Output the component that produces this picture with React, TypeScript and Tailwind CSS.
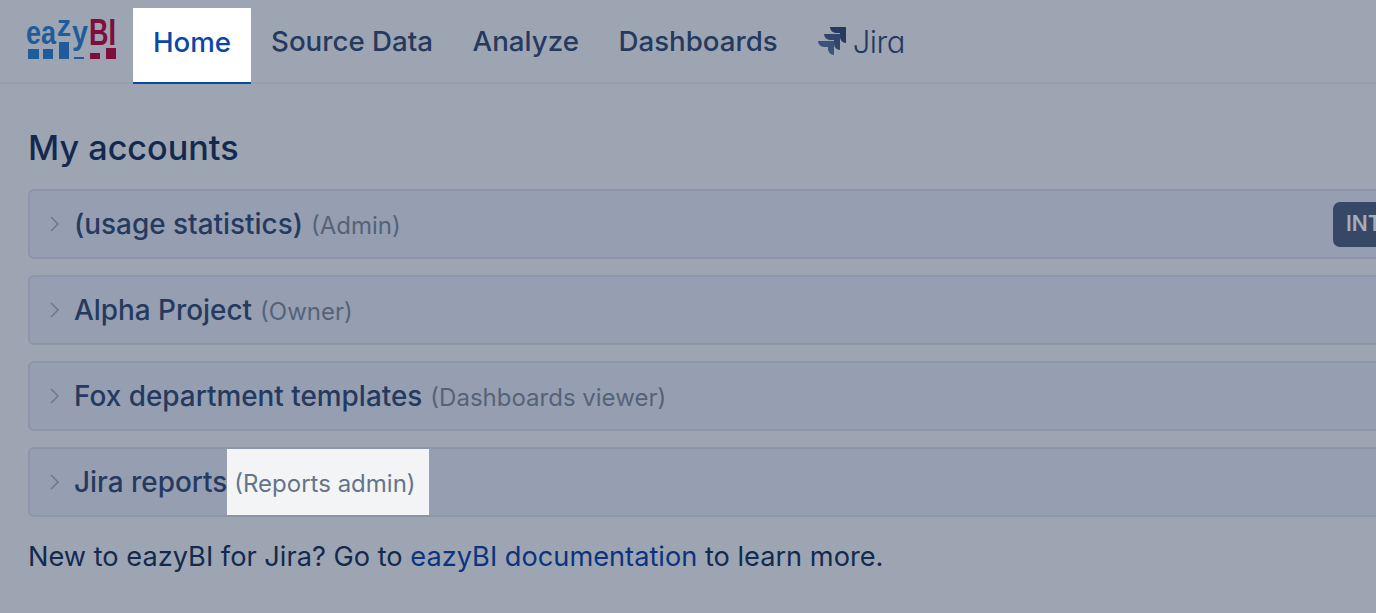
const navItems = ['Source Data', 'Analyze', 'Dashboards'];

function Logo() {
  const blue = '#1f5c9c';
  const red = '#7e0f3d';
  const font = 'Liberation Sans, sans-serif';
  return (
    <svg width="92" height="46" viewBox="0 0 92 46" className="shrink-0 overflow-visible">
      <text x="0" y="26" fontFamily={font} fontWeight="700" fontSize="33" fill={blue} textLength="30" lengthAdjust="spacingAndGlyphs">ea</text>
      <text x="31" y="18" fontFamily={font} fontWeight="700" fontSize="30" fill={blue} textLength="14" lengthAdjust="spacingAndGlyphs">z</text>
      <text x="46" y="26" fontFamily={font} fontWeight="700" fontSize="33" fill={blue} textLength="16" lengthAdjust="spacingAndGlyphs">y</text>
      <text x="63" y="27" fontFamily={font} fontWeight="700" fontSize="36" fill={red} textLength="27" lengthAdjust="spacingAndGlyphs">BI</text>
      <rect x="2" y="31" width="11" height="10" fill={blue} />
      <rect x="17" y="31" width="10" height="10" fill={blue} />
      <rect x="33" y="24" width="10" height="17" fill={blue} />
      <rect x="48" y="39" width="10" height="2" fill={blue} />
      <rect x="64" y="35" width="10" height="6" fill={red} />
      <rect x="80" y="30" width="10" height="11" fill={red} />
    </svg>
  );
}

function JiraMark() {
  return (
    <div className="flex items-center gap-[6px] ml-[39px] text-[#253a5e]">
      <svg width="30" height="30" viewBox="0 0 30 30">
        <path d="M13 1h16v16a6 6 0 0 1-6-6V7h-4a6 6 0 0 1-6-6z" fill="#253a5e" />
        <path d="M7 8h16v16a6 6 0 0 1-6-6v-4h-4a6 6 0 0 1-6-6z" fill="#30466c" />
        <path d="M1 15h16v14a6 6 0 0 1-6-6v-2H7a6 6 0 0 1-6-6z" fill="#3c5278" />
      </svg>
      <span className="text-[31px] font-light leading-none tracking-[-0.5px] [font-feature-settings:'cv11']">Jira</span>
    </div>
  );
}

function AccountRow({ name, role, badge, spot }: { name: string; role: string; badge?: string; spot?: boolean }) {
  return (
    <div className="h-[70px] rounded-[6px] border-2 border-[#8c96a9] bg-[#959fb1] flex items-center overflow-hidden">
      <svg width="12" height="18" viewBox="0 0 12 18" className="ml-[19px] mr-[13px] shrink-0">
        <path d="M2 2l7 7-7 7" fill="none" stroke="#6d7a90" strokeWidth="1.6" />
      </svg>
      <span className="text-[27.9px] font-medium text-[#253a5e] whitespace-nowrap pt-[1px]">{name}</span>
      {spot ? (
        <span className="self-stretch flex items-center pl-[7px] pr-[13px] pt-[4px] bg-[#f3f4f6] text-[24px] text-[#64748b] whitespace-nowrap">{role}</span>
      ) : (
        <span className="ml-[8px] pt-[3px] text-[24px] text-[#556379] whitespace-nowrap">{role}</span>
      )}
      {badge && (
        <span className="ml-auto shrink-0 w-[51px] h-[45px] rounded-l-[7px] bg-[#374766] text-[#a4adbd] text-[21px] font-semibold flex items-center pl-[13px]">{badge}</span>
      )}
    </div>
  );
}

export default function App() {
  return (
    <div className="w-[1376px] h-[613px] overflow-hidden bg-[#9da5b3] font-['Inter',sans-serif] text-[#132a4e]">
      <nav className="h-[84px] border-b-2 border-[#959fb0] flex items-end pl-[26px]">
        <div className="self-center mr-[15px]"><Logo /></div>
        <a className="h-[76px] w-[118px] -mb-[2px] bg-white border-b-2 border-[#0a47a6] text-[#0a47a6] text-[27.7px] font-medium pb-[5px] flex items-center justify-center">Home</a>
        <div className="self-stretch flex items-center pl-[20px] pt-[1px] gap-[39.5px] text-[27.7px] font-medium text-[#253a5e]">
          {navItems.map((item) => (
            <a key={item} className="whitespace-nowrap">{item}</a>
          ))}
        </div>
        <div className="self-stretch flex items-center"><JiraMark /></div>
      </nav>
      <main className="pl-[28px] pt-[43px]">
        <h1 className="text-[34.2px] leading-[42px] font-medium text-[#132a4e] mb-[20px]">My accounts</h1>
        <div className="flex flex-col gap-[16px] -mr-[10px]">
          <AccountRow name="(usage statistics)" role="(Admin)" badge="INT" />
          <AccountRow name="Alpha Project" role="(Owner)" />
          <AccountRow name="Fox department templates" role="(Dashboards viewer)" />
          <AccountRow name="Jira reports" role="(Reports admin)" spot />
        </div>
        <p className="mt-[22px] text-[27.2px] leading-[36px] text-[#132a4e]">
          New to eazyBI for Jira? Go to <a className="text-[#0b3380]">eazyBI documentation</a> to learn more.
        </p>
      </main>
    </div>
  );
}
